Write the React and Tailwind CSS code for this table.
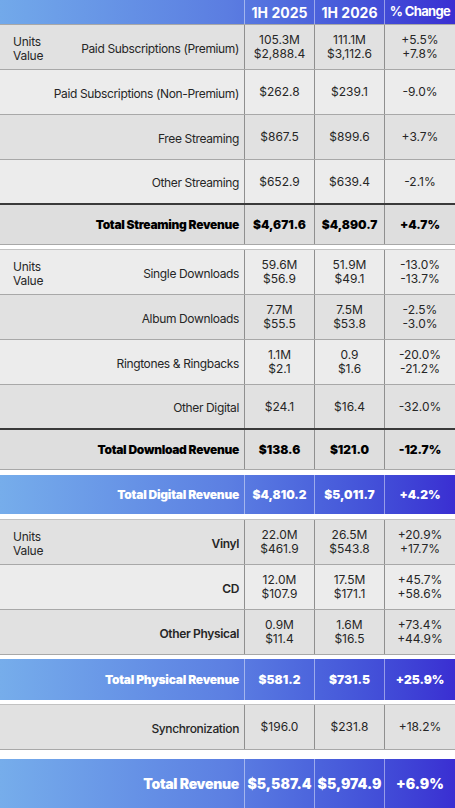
const font = { fontFamily: "Inter, 'Liberation Sans', sans-serif" };

const streaming = [
  { label: "Paid Subscriptions (Premium)", units: true, a: ["105.3M", "$2,888.4"], b: ["111.1M", "$3,112.6"], c: ["+5.5%", "+7.8%"], dark: true },
  { label: "Paid Subscriptions (Non-Premium)", a: ["$262.8"], b: ["$239.1"], c: ["-9.0%"] },
  { label: "Free Streaming", a: ["$867.5"], b: ["$899.6"], c: ["+3.7%"], dark: true },
  { label: "Other Streaming", a: ["$652.9"], b: ["$639.4"], c: ["-2.1%"] },
];

const downloads = [
  { label: "Single Downloads", units: true, a: ["59.6M", "$56.9"], b: ["51.9M", "$49.1"], c: ["-13.0%", "-13.7%"] },
  { label: "Album Downloads", a: ["7.7M", "$55.5"], b: ["7.5M", "$53.8"], c: ["-2.5%", "-3.0%"], dark: true },
  { label: "Ringtones & Ringbacks", a: ["1.1M", "$2.1"], b: ["0.9", "$1.6"], c: ["-20.0%", "-21.2%"] },
  { label: "Other Digital", a: ["$24.1"], b: ["$16.4"], c: ["-32.0%"], dark: true },
];

const physical = [
  { label: "Vinyl", units: true, bold: true, a: ["22.0M", "$461.9"], b: ["26.5M", "$543.8"], c: ["+20.9%", "+17.7%"], dark: true },
  { label: "CD", bold: true, a: ["12.0M", "$107.9"], b: ["17.5M", "$171.1"], c: ["+45.7%", "+58.6%"] },
  { label: "Other Physical", bold: true, a: ["0.9M", "$11.4"], b: ["1.6M", "$16.5"], c: ["+73.4%", "+44.9%"], dark: true },
];

function Cell({ lines }) {
  return (
    <div className="flex flex-col items-center justify-center border-l border-[#8f8f8f] leading-[14px]">
      {lines.map((l) => (
        <span key={l}>{l}</span>
      ))}
    </div>
  );
}

function Row({ row, last }) {
  return (
    <div
      className={`grid h-[45px] grid-cols-[244px_70px_70px_71px] text-[12px] text-[#262626] ${
        row.dark ? "bg-[#e1e1e1]" : "bg-[#ececec]"
      } ${last ? "border-b-2 border-[#3a3a3a]" : "border-b border-[#a8a8a8]"}`}
    >
      <div className="flex items-center justify-between pl-[13px] pr-[5px]">
        <div className="flex flex-col leading-[14px] pt-[3px] tracking-[-0.02em]">
          {row.units && (
            <>
              <span>Units</span>
              <span>Value</span>
            </>
          )}
        </div>
        <span
          className={`pt-[3px] tracking-[-0.03em] ${
            row.bold ? "font-semibold" : row.medium ? "font-medium" : ""
          }`}
        >
          {row.label}
        </span>
      </div>
      <Cell lines={row.a} />
      <Cell lines={row.b} />
      <Cell lines={row.c} />
    </div>
  );
}

function TotalRow({ label, a, b, c }) {
  return (
    <div className="grid h-[40px] grid-cols-[244px_70px_70px_71px] border-b border-[#a8a8a8] bg-[#dedede] text-[12px] font-black text-black">
      <div className="flex items-center justify-end pr-[5px] tracking-[-0.025em]">{label}</div>
      {[a, b, c].map((v) => (
        <div key={v} className="flex items-center justify-center border-l border-[#8f8f8f]">
          {v}
        </div>
      ))}
    </div>
  );
}

function BlueRow({ label, a, b, c, h, big }) {
  return (
    <div
      className={`grid grid-cols-[244px_70px_70px_71px] bg-linear-to-r from-[#76adeb] via-[#5c7fe2] to-[#3a2ed2] font-black text-white ${h} ${
        big ? "text-[14px]" : "text-[12px]"
      }`}
    >
      <div className="flex items-center justify-end pr-[5px] tracking-[-0.02em]">{label}</div>
      {[a, b, c].map((v) => (
        <div key={v} className="flex items-center justify-center border-l border-white/45">
          {v}
        </div>
      ))}
    </div>
  );
}

export default function App() {
  return (
    <div className="w-[455px] h-[808px] overflow-hidden bg-white" style={font}>
      {/* Header */}
      <div className="grid h-6 grid-cols-[244px_70px_70px_71px] bg-linear-to-r from-[#72a9ea] via-[#5b7de1] to-[#3a2ed2] text-[14px] font-bold text-white">
        <div />
        <div className="flex items-center justify-center border-l border-white/45">1H 2025</div>
        <div className="flex items-center justify-center border-l border-white/45">1H 2026</div>
        <div className="flex items-center justify-center border-l border-white/45 text-[13px] tracking-[-0.05em]">
          % Change
        </div>
      </div>

      {/* Streaming */}
      <div className="border-t border-[#a8a8a8]">
        {streaming.map((r, i) => (
          <Row key={r.label} row={r} last={i === streaming.length - 1} />
        ))}
        <TotalRow label="Total Streaming Revenue" a="$4,671.6" b="$4,890.7" c="+4.7%" />
      </div>

      {/* Downloads */}
      <div className="mt-[4px] border-t border-[#c2c2c2]">
        {downloads.map((r, i) => (
          <Row key={r.label} row={r} last={i === downloads.length - 1} />
        ))}
        <TotalRow label="Total Download Revenue" a="$138.6" b="$121.0" c="-12.7%" />
      </div>

      <div className="mt-[5px]">
        <BlueRow h="h-[39px]" label="Total Digital Revenue" a="$4,810.2" b="$5,011.7" c="+4.2%" />
      </div>

      {/* Physical */}
      <div className="mt-[5px] border-t border-[#c2c2c2]">
        {physical.map((r) => (
          <Row key={r.label} row={r} />
        ))}
      </div>

      <div className="mt-[4px]">
        <BlueRow h="h-[41px]" label="Total Physical Revenue" a="$581.2" b="$731.5" c="+25.9%" />
      </div>

      <div className="mt-[4px] border-t border-[#c2c2c2]">
        <Row row={{ label: "Synchronization", medium: true, a: ["$196.0"], b: ["$231.8"], c: ["+18.2%"], dark: true }} />
      </div>

      <div className="mt-[9px]">
        <BlueRow big h="h-[49px]" label="Total Revenue" a="$5,587.4" b="$5,974.9" c="+6.9%" />
      </div>
    </div>
  );
}
